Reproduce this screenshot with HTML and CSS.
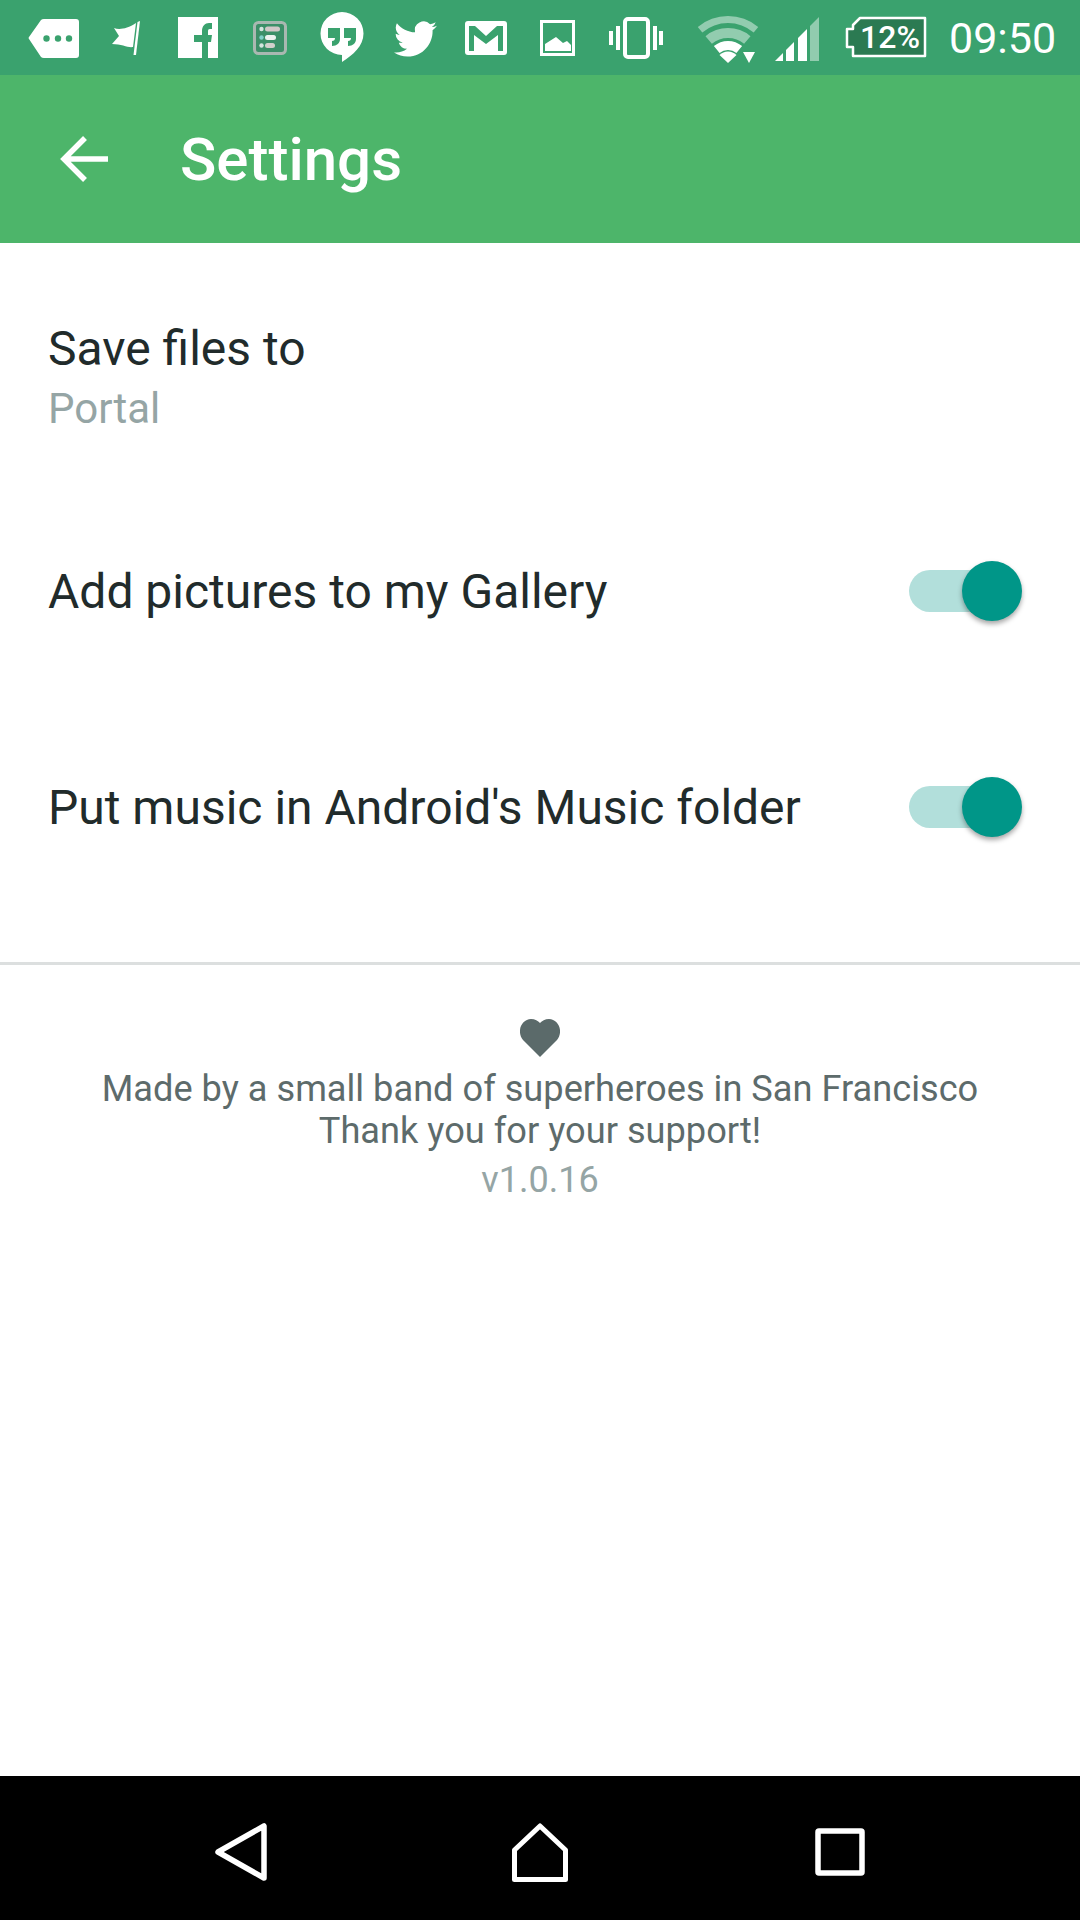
FILE: index.html
```html
<!DOCTYPE html>
<html lang="en">
<head>
    <meta charset="UTF-8">
    <meta name="viewport" content="width=device-width, initial-scale=1.0">
    <title>Settings</title>
    <link rel="stylesheet" href="styles.css">
</head>
<body>
    <div class="screen">
        <div class="status-bar">
            <!-- each icon's viewBox follows the bar's own x coordinates -->
            <svg width="95" height="76" viewBox="0 0 95 76">
                <path fill="#fff" d="M44 19H76Q79 19 79 22V55Q79 58 76 58H44Q42 58 41 57L29 39Q28 38 29 37L41 20Q42 19 44 19Z"/>
                <circle cx="46.500" cy="38.500" r="3.200" fill="#3aa26e"/>
                <circle cx="58" cy="38.500" r="3.200" fill="#3aa26e"/>
                <circle cx="69" cy="38.500" r="3.200" fill="#3aa26e"/>
            </svg>
            <svg width="70" height="76" viewBox="95 0 70 76">
                <path fill="#fff" d="M114 28C119 30 127 29 136 23L133 47C128 48 122 44 112 44L119 36Z"/>
                <path fill="#fff" d="M137.500 22L140 21L136 55H133.500Z"/>
            </svg>
            <svg width="75" height="76" viewBox="165 0 75 76">
                <rect x="178" y="17" width="40" height="41" fill="#fff"/>
                <path fill="#3aa26e" d="M202 58V42H194V35H202V31C202 26 205 23 209 23H212V29H210C208 29 208 30 208 32V35H212L211 42H208V58Z"/>
            </svg>
            <svg width="65" height="76" viewBox="240 0 65 76">
                <rect x="254.500" y="22.500" width="31" height="31" rx="4" fill="#3c8f68" stroke="#a9b8b1" stroke-width="3"/>
                <circle cx="261.500" cy="29" r="2.200" fill="#d5e5df"/>
                <circle cx="261.500" cy="37.500" r="2.200" fill="#7fd0c8"/>
                <circle cx="261.500" cy="45.500" r="2.200" fill="#d5e5df"/>
                <rect x="265" y="26.500" width="15" height="5" rx="2.500" fill="#d3c8c8"/>
                <rect x="265" y="35" width="11" height="5" rx="2.500" fill="#eef2f0"/>
                <rect x="265" y="43" width="10" height="5" rx="2.500" fill="#d3d0cc"/>
            </svg>
            <svg width="75" height="76" viewBox="305 0 75 76">
                <path fill="#fff" d="M342 12A21.500 21.500 0 0 1 363.500 33.500C363.500 46 353 55 342 62V55A21.500 21.500 0 0 1 342 12Z"/>
                <path fill="#3aa26e" d="M328 28H340V39C340 43 337 46 332 46V41C334 41 335 40 335 38H328Z"/>
                <path fill="#3aa26e" d="M344 28H356V39C356 43 353 46 348 46V41C350 41 351 40 351 38H344Z"/>
            </svg>
            <svg width="75" height="76" viewBox="380 0 75 76">
                <g transform="translate(394 17.500) scale(1.790)">
                    <path fill="#fff" d="M23.953 4.57a10 10 0 01-2.825.775 4.958 4.958 0 002.163-2.723c-.951.555-2.005.959-3.127 1.184a4.92 4.92 0 00-8.384 4.482C7.69 8.095 4.067 6.13 1.64 3.162a4.822 4.822 0 00-.666 2.475c0 1.71.87 3.213 2.188 4.096a4.904 4.904 0 01-2.228-.616v.06a4.923 4.923 0 003.946 4.827 4.996 4.996 0 01-2.212.085 4.936 4.936 0 004.604 3.417 9.867 9.867 0 01-6.102 2.105c-.39 0-.779-.023-1.17-.067a13.995 13.995 0 007.557 2.209c9.053 0 13.998-7.496 13.998-13.985 0-.21 0-.42-.015-.63A9.935 9.935 0 0024 4.59z"/>
                </g>
            </svg>
            <svg width="75" height="76" viewBox="455 0 75 76">
                <rect x="465" y="21" width="42" height="34" rx="3" fill="#fff"/>
                <path fill="#3aa26e" d="M469 26H475L486 36L497 26H503V51H498V35L486 44L474 35V51H469Z"/>
            </svg>
            <svg width="70" height="76" viewBox="530 0 70 76">
                <rect x="541.500" y="21.500" width="32" height="33" fill="none" stroke="#fff" stroke-width="3"/>
                <path fill="#fff" d="M545 51V44L556 37L563 43L567 41L571 45V51Z"/>
            </svg>
            <svg width="80" height="76" viewBox="600 0 80 76">
                <rect x="625" y="19" width="23" height="38" rx="3" fill="none" stroke="#fff" stroke-width="4"/>
                <rect x="609" y="31" width="4" height="14" fill="#fff"/>
                <rect x="616" y="26" width="4" height="24" fill="#fff"/>
                <rect x="653" y="26" width="4" height="24" fill="#fff"/>
                <rect x="659" y="31" width="4" height="14" fill="#fff"/>
            </svg>
            <svg width="90" height="76" viewBox="680 0 90 76">
                <path fill="#fff" fill-opacity="0.45" d="M697.800 27A47 47 0 0 1 758.200 27L753.700 32.400A40 40 0 0 0 702.300 32.400Z"/>
                <path fill="#fff" fill-opacity="0.45" d="M705.500 36.200A35 35 0 0 1 750.500 36.200L744.100 43.800A25 25 0 0 0 711.900 43.800Z"/>
                <path fill="#fff" d="M713.900 46.100A22 22 0 0 1 742.100 46.100L736.400 53A13 13 0 0 0 719.600 53Z"/>
                <path fill="#fff" d="M719.500 55A12 12 0 0 1 736.500 55L728 63Z"/>
                <path fill="#fff" d="M743 52H755L749 63Z"/>
            </svg>
            <svg width="70" height="76" viewBox="770 0 70 76">
                <path fill="#fff" d="M775 61L783 53V61Z"/>
                <path fill="#fff" d="M786 50L794 42V61H786Z"/>
                <path fill="#fff" d="M798 38L807 29V61H798Z"/>
                <path fill="#fff" fill-opacity="0.45" d="M810 26L819 17V61H810Z"/>
            </svg>
            <svg width="100" height="76" viewBox="840 0 100 76">
                <path fill="#2b7a52" stroke="#fff" stroke-width="2.500" stroke-linejoin="round" d="M860 18H925V56H853V47H847V29H853V25Z"/>
                <text class="battery-text" x="860" y="48">12%</text>
            </svg>
            <span class="clock">09:50</span>
        </div>
        <div class="toolbar">
            <svg class="back-arrow" width="48" height="48" viewBox="0 0 48 48">
                <path fill="none" stroke="#fff" stroke-width="5.500" d="M48 24H4M25 3L4 24L25 45"/>
            </svg>
            <h1>Settings</h1>
        </div>
        <div class="content">
            <div class="settings">
                <div class="setting save-to">
                    <div class="setting-title">Save files to</div>
                    <div class="setting-sub">Portal</div>
                </div>
                <div class="setting toggle-row">
                    <div class="setting-title">Add pictures to my Gallery</div>
                    <div class="switch"><span class="track"></span><span class="thumb"></span></div>
                </div>
                <div class="setting toggle-row">
                    <div class="setting-title">Put music in Android's Music folder</div>
                    <div class="switch"><span class="track"></span><span class="thumb"></span></div>
                </div>
            </div>
            <div class="about">
                <svg class="heart" width="40" height="38" viewBox="0 0 40 38">
                    <path fill="#5b6a6a" d="M20 38L3 21C-4 12 2 0 11 0C15 0 18 2 20 4C22 2 25 0 29 0C38 0 44 12 37 21Z"/>
                </svg>
                <div class="about-line">Made by a small band of superheroes in San Francisco</div>
                <div class="about-line">Thank you for your support!</div>
                <div class="version">v1.0.16</div>
            </div>
        </div>
        <div class="nav-bar">
            <svg width="52" height="58" viewBox="0 0 52 58">
                <path fill="none" stroke="#fff" stroke-width="5.500" stroke-linejoin="round" d="M49 3V55L3 29Z"/>
            </svg>
            <svg class="nav-home" width="56" height="59" viewBox="0 0 56 59">
                <path fill="none" stroke="#fff" stroke-width="5" stroke-linejoin="round" d="M2.500 56.500V27L28 3L53.500 27V56.500Z"/>
            </svg>
            <svg width="50" height="48" viewBox="0 0 50 48">
                <rect x="3" y="3" width="44" height="42" rx="1" fill="none" stroke="#fff" stroke-width="5.500"/>
            </svg>
        </div>
    </div>
</body>
</html>
```

FILE: styles.css
```css
body {
    font-family: Roboto, "Liberation Sans", sans-serif;
    margin: 0;
    padding: 0;
    background-color: #fff;
}
.screen {
    display: flex;
    flex-direction: column;
    width: 1080px;
    height: 1920px;
    overflow: hidden;
}
.status-bar {
    display: flex;
    align-items: flex-start;
    flex: none;
    height: 75px;
    background: #3aa26e;
}
.battery-text {
    font-size: 32px;
    font-weight: 500;
    fill: #fff;
}
.clock {
    margin: 13px 0 0 9px;
    font-size: 43px;
    color: #fff;
}
.toolbar {
    display: flex;
    align-items: center;
    flex: none;
    height: 168px;
    padding-left: 60px;
    background: #4db56a;
}
.back-arrow {
    margin-right: 72px;
}
.toolbar h1 {
    margin: 0;
    font-size: 60px;
    font-weight: 500;
    color: #fff;
}
.content {
    flex: 1;
}
.settings {
    padding-bottom: 47px;
    border-bottom: 3px solid #dcdfdf;
}
.setting {
    padding: 0 48px;
    color: #212b2b;
}
.save-to {
    padding-top: 76px;
    height: 164px;
}
.toggle-row {
    display: flex;
    align-items: center;
    justify-content: space-between;
    height: 216px;
}
.toggle-row .setting-title {
    padding-top: 2px;
}
.setting-title {
    font-size: 48px;
    line-height: 60px;
}
.setting-sub {
    font-size: 42px;
    line-height: 60px;
    color: #95a5a5;
}
.switch {
    position: relative;
    width: 113px;
    height: 60px;
    margin-right: 10px;
}
.track {
    position: absolute;
    left: 0;
    top: 9px;
    width: 102px;
    height: 42px;
    border-radius: 21px;
    background: #b2dfdb;
}
.thumb {
    position: absolute;
    right: 0;
    top: 0;
    width: 60px;
    height: 60px;
    border-radius: 50%;
    background: #009688;
    box-shadow: 0 3px 5px rgba(0, 0, 0, 0.35);
}
.about {
    display: flex;
    flex-direction: column;
    align-items: center;
    padding-top: 54px;
    color: #5d6b6b;
}
.heart {
    margin-bottom: 11px;
}
.about-line {
    font-size: 36.200px;
    line-height: 42px;
}
.version {
    margin-top: 7px;
    font-size: 36px;
    line-height: 42px;
    color: #95a5a5;
}
.nav-bar {
    display: flex;
    align-items: center;
    justify-content: space-between;
    flex: none;
    height: 144px;
    padding: 8px 215px 0;
    box-sizing: border-box;
    background: #000;
}
.nav-home {
    margin-right: 2px;
}
```
